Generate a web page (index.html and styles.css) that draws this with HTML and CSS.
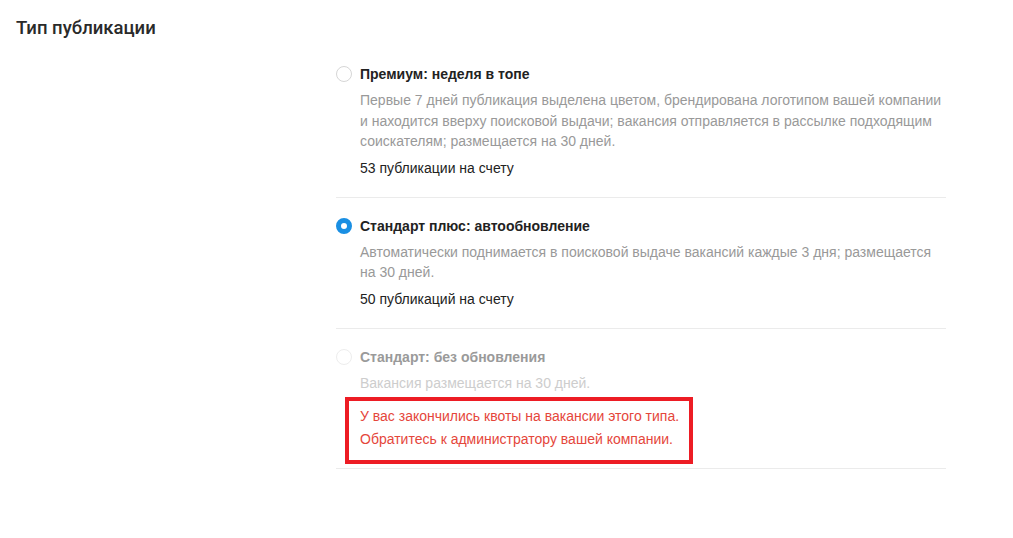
FILE: index.html
```html
<!DOCTYPE html>
<html lang="ru">
<head>
<meta charset="utf-8">
<link rel="stylesheet" href="styles.css">
</head>
<body>
<div class="page">
  <h2 class="heading">Тип публикации</h2>
  <div class="options">
    <div class="option">
      <div class="option-head">
        <span class="radio"></span>
        <span class="option-title">Премиум: неделя в топе</span>
      </div>
      <div class="option-body">
        <p class="desc">Первые 7 дней публикация выделена цветом, брендирована логотипом вашей компании и находится вверху поисковой выдачи; вакансия отправляется в рассылке подходящим соискателям; размещается на 30 дней.</p>
        <p class="count">53 публикации на счету</p>
      </div>
    </div>
    <div class="option">
      <div class="option-head">
        <span class="radio radio-checked"></span>
        <span class="option-title">Стандарт плюс: автообновление</span>
      </div>
      <div class="option-body">
        <p class="desc">Автоматически поднимается в поисковой выдаче вакансий каждые 3 дня; размещается на 30 дней.</p>
        <p class="count">50 публикаций на счету</p>
      </div>
    </div>
    <div class="option option-disabled option-last">
      <div class="option-head">
        <span class="radio radio-disabled"></span>
        <span class="option-title">Стандарт: без обновления</span>
      </div>
      <div class="option-body">
        <p class="desc">Вакансия размещается на 30 дней.</p>
      </div>
      <div class="quota-box">
        <p class="quota">У вас закончились квоты на вакансии этого типа.<br>Обратитесь к администратору вашей компании.</p>
      </div>
    </div>
  </div>
</div>
</body>
</html>
```

FILE: styles.css
```css
* { box-sizing: border-box; }
html, body { margin: 0; padding: 0; background: #fff; }
body {
  font-family: "Liberation Sans", Arial, sans-serif;
  font-size: 14px;
  color: #333;
}
.page {
  padding: 16px 0 0 16px;
}
.heading {
  margin: 0;
  font-family: Roboto, "Noto Sans", sans-serif;
  font-weight: 500;
  font-size: 18.5px;
  line-height: 24px;
  color: #2a2a2a;
}
.options {
  margin: 24px 0 0 320px;
  width: 610px;
}
.option {
  padding: 18px 0 18px;
  border-bottom: 1px solid #ebebeb;
}
.option:first-child { padding-top: 0; }
.option-last { padding-bottom: 4px; }
.option-head {
  display: flex;
  align-items: center;
  gap: 8px;
  height: 20px;
}
.radio {
  width: 16px;
  height: 16px;
  border-radius: 50%;
  border: 1px solid #d6d6d6;
  background: #fff;
  flex: none;
}
.radio-checked {
  border: 5px solid #1a8fe3;
}
.radio-disabled {
  border-color: #ededed;
}
.option-title {
  font-weight: bold;
  line-height: 20px;
  color: #222;
}
.option-body {
  padding-left: 24px;
  width: 609px;
}
.desc {
  margin: 6px 0 0;
  line-height: 20.5px;
  color: #999;
}
.count {
  margin: 6px 0 0;
  line-height: 21px;
  color: #222;
}
.option-disabled .option-title { color: #9a9a9a; }
.option-disabled .desc { color: #cdcdcd; }
.quota-box {
  display: inline-block;
  margin: 4px 0 0 9px;
  border: 4px solid #ed1c24;
  padding: 4px 10px 9px 11px;
}
.quota {
  margin: 0;
  line-height: 23px;
  color: #e5463b;
}
```
